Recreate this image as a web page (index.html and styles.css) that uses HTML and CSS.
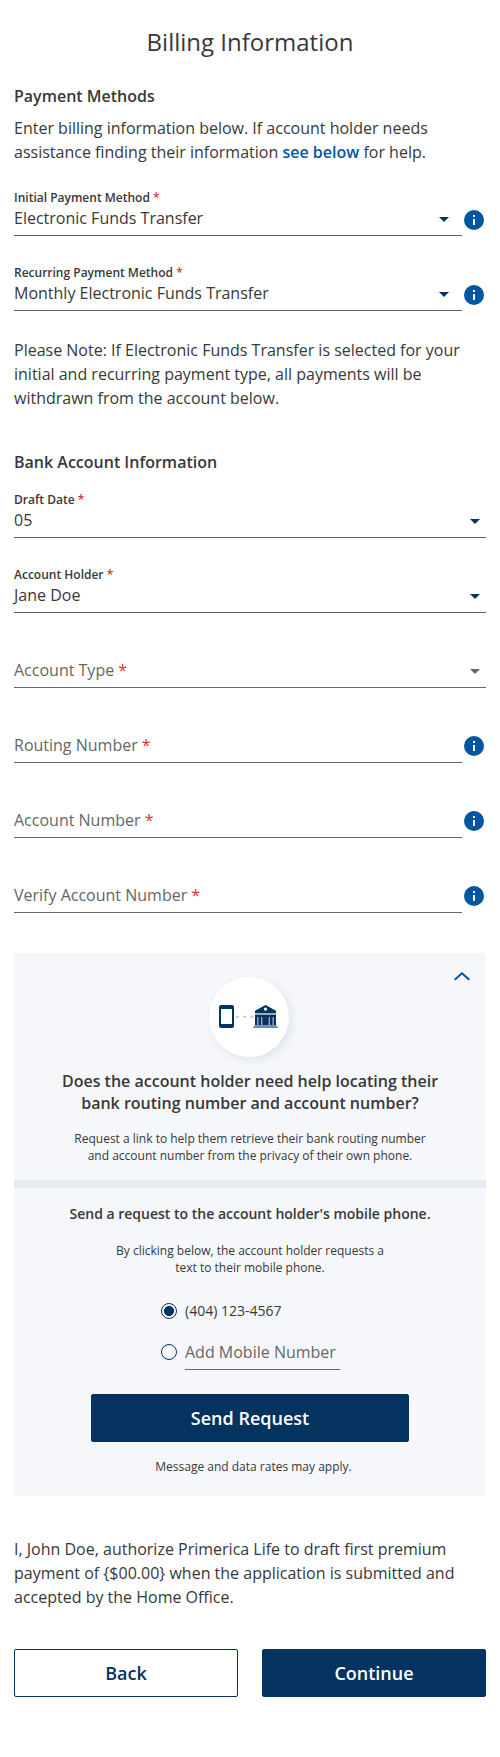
FILE: index.html
```html
<!DOCTYPE html>
<html lang="en">
<head>
<meta charset="utf-8">
<title>Billing Information</title>
<link rel="stylesheet" href="styles.css">
</head>
<body>
<svg class="defs" width="0" height="0" aria-hidden="true">
  <symbol id="info" viewBox="0 0 20 20"><circle cx="10" cy="10" r="10" fill="#00569f"/><path d="M9 5h2v2H9zM9 9h2v6H9z" fill="#fff"/></symbol>
  <symbol id="caret" viewBox="0 0 10 5"><path d="M0 0h10L5 5z" fill="currentColor"/></symbol>
</svg>
<main class="page">
  <h1 class="title">Billing Information</h1>
  <h2 class="heading">Payment Methods</h2>
  <p class="text intro">Enter billing information below. If account holder needs assistance finding their information <a class="link">see below</a> for help.</p>

  <div class="fields methods">
    <div class="row">
      <div class="field"><div class="label">Initial Payment Method <span class="req">*</span></div><div class="value">Electronic Funds Transfer<svg class="caret"><use href="#caret"/></svg></div></div>
      <svg class="info"><use href="#info"/></svg>
    </div>
    <div class="row">
      <div class="field"><div class="label">Recurring Payment Method <span class="req">*</span></div><div class="value">Monthly Electronic Funds Transfer<svg class="caret"><use href="#caret"/></svg></div></div>
      <svg class="info"><use href="#info"/></svg>
    </div>
  </div>

  <p class="text note">Please Note: If Electronic Funds Transfer is selected for your initial and recurring payment type, all payments will be withdrawn from the account below.</p>

  <h2 class="heading bank-heading">Bank Account Information</h2>
  <div class="fields bank">
    <div class="row"><div class="field"><div class="label">Draft Date <span class="req">*</span></div><div class="value">05<svg class="caret"><use href="#caret"/></svg></div></div></div>
    <div class="row"><div class="field"><div class="label">Account Holder <span class="req">*</span></div><div class="value">Jane Doe<svg class="caret"><use href="#caret"/></svg></div></div></div>
    <div class="row"><div class="field"><div class="value empty"><span>Account Type <span class="req">*</span></span><svg class="caret caret-muted"><use href="#caret"/></svg></div></div></div>
    <div class="row"><div class="field"><div class="value empty"><span>Routing Number <span class="req">*</span></span></div></div><svg class="info"><use href="#info"/></svg></div>
    <div class="row"><div class="field"><div class="value empty"><span>Account Number <span class="req">*</span></span></div></div><svg class="info"><use href="#info"/></svg></div>
    <div class="row"><div class="field"><div class="value empty"><span>Verify Account Number <span class="req">*</span></span></div></div><svg class="info"><use href="#info"/></svg></div>
  </div>

  <section class="panel">
    <div class="panel-top">
      <svg class="chevron" viewBox="0 0 16 9"><path d="M.7 7.800 8 1.300l7.300 6.500" fill="none" stroke="#00569f" stroke-width="2"/></svg>
      <div class="badge">
        <svg width="60" height="24" viewBox="0 0 60 24">
          <path fill="#043360" fill-rule="evenodd" d="M2 0h11a2 2 0 0 1 2 2v19a2 2 0 0 1-2 2H2a2 2 0 0 1-2-2V2a2 2 0 0 1 2-2zM2 4v15h11V4z"/>
          <path stroke="#b3cce2" stroke-width="1.6" stroke-dasharray="3 4.1" d="M17 11.600h17.500"/>
          <path fill="#043360" fill-rule="evenodd" d="M46.500 0 57 5.800V8H36V5.800zM46.500 2.400a1.700 1.700 0 1 0 0 3.400 1.700 1.700 0 0 0 0-3.400zM36 9.500h21v11H36z"/>
          <path fill="#9db2c5" d="M36 8h21v1.500H36zM38.200 12h1.300v8.500h-1.300zM42 12h1.300v8.500H42zM49.700 12H51v8.500h-1.300zM53.500 12h1.300v8.500h-1.300z"/>
          <path fill="#6f8ca9" d="M35 20.800h23l1 2.200H34z"/>
        </svg>
      </div>
      <h3 class="panel-title">Does the account holder need help locating their<br>bank routing number and account number?</h3>
      <p class="small">Request a link to help them retrieve their bank routing number<br>and account number from the privacy of their own phone.</p>
    </div>
    <div class="panel-bottom">
      <h4 class="request-title">Send a request to the account holder's mobile phone.</h4>
      <p class="small clicking">By clicking below, the account holder requests a<br>text to their mobile phone.</p>
      <div class="options">
        <div class="option"><span class="radio radio-on"></span><span class="phone">(404) 123-4567</span></div>
        <div class="option"><span class="radio"></span><span class="mobile">Add Mobile Number</span></div>
      </div>
      <button class="button send">Send Request</button>
      <p class="small rates">Message and data rates may apply.</p>
    </div>
  </section>

  <p class="text authorize">I, John Doe, authorize Primerica Life to draft first premium payment of {$00.00} when the application is submitted and accepted by the Home Office.</p>
  <div class="actions">
    <button class="button outline">Back</button>
    <button class="button">Continue</button>
  </div>
</main>
</body>
</html>
```
FILE: styles.css
```css
* { box-sizing: border-box; }
body { margin: 0; background: #fff; color: #383838; font-family: "Open Sans", sans-serif; font-size: 16px; line-height: 24px; }
h1, h2, h3, h4, p { margin: 0; }
svg { display: block; flex: none; }
.defs { position: absolute; }
.page { padding: 24px 14px 60px; }
.title { font-size: 24px; font-weight: 400; line-height: 36px; text-align: center; }
.heading { font-size: 16px; font-weight: 600; line-height: 24px; margin-top: 24px; }
.intro { margin-top: 8px; }
.link { color: #00569f; font-weight: 600; }
.fields { display: flex; flex-direction: column; gap: 28px; }
.methods { margin-top: 25px; }
.row { display: flex; height: 47px; }
.field { flex: 1; display: flex; flex-direction: column; justify-content: flex-end; border-bottom: 1px solid #666; padding-bottom: 5px; }
.label { font-size: 12px; font-weight: 600; line-height: 16px; }
.req { color: #e03131; }
.value { display: flex; justify-content: space-between; align-items: center; height: 24px; padding-right: 6px; }
.row:has(.info) .value { padding-right: 13px; }
.empty { color: #666; }
.caret { width: 10px; height: 5px; color: #043360; margin-top: 3px; }
.caret-muted { color: #666; }
.info { width: 20px; height: 20px; margin: 21px 2px 0; }
.bank .info { margin-top: 20px; }
.note { margin-top: 27px; }
.bank-heading { margin-top: 40px; }
.bank { margin-top: 17px; }
.panel { height: 543px; margin-top: 40px; background: #f6f7fb; text-align: center; }
.panel-top { position: relative; height: 235px; padding-top: 24px; border-bottom: 8px solid #e7ecf4; }
.chevron { position: absolute; top: 19px; right: 16px; width: 16px; height: 9px; }
.badge { display: flex; align-items: center; justify-content: center; width: 80px; height: 80px; margin-left: 194.5px; border-radius: 50%; background: #fff; box-shadow: 3px 3px 8px rgba(4, 51, 96, .1); }
.panel-title { margin-top: 13px; font-size: 16px; font-weight: 600; line-height: 22px; }
.small { margin-top: 16px; font-size: 12px; line-height: 17px; }
.request-title { padding-top: 15px; font-size: 14px; font-weight: 600; line-height: 22px; }
.clicking { margin-top: 17px; }
.options { width: 178px; margin: 23px 0 0 147px; }
.option { display: flex; align-items: flex-start; gap: 8px; height: 41px; text-align: left; }
.radio { width: 16px; height: 16px; margin-top: 4px; flex: none; border: 1px solid #043360; border-radius: 50%; }
.radio-on { background: radial-gradient(circle, #043360 4.700px, transparent 5.300px); }
.phone { font-size: 14px; }
.mobile { width: 155px; height: 30px; flex: none; color: #666; border-bottom: 1px solid #666; }
.button { height: 48px; padding: 0; border: 1px solid #043360; border-radius: 2px; background: #043360; color: #fff; font-family: "Open Sans", sans-serif; font-size: 18px; font-weight: 600; line-height: 24px; }
.send { display: block; width: 318px; margin: 13px auto 0; }
.rates { margin-top: 16px; padding-left: 7px; }
.authorize { margin-top: 41px; }
.actions { display: grid; grid-template-columns: 1fr 1fr; gap: 24px; margin-top: 40px; }
.outline { background: #fff; color: #043360; }
```
